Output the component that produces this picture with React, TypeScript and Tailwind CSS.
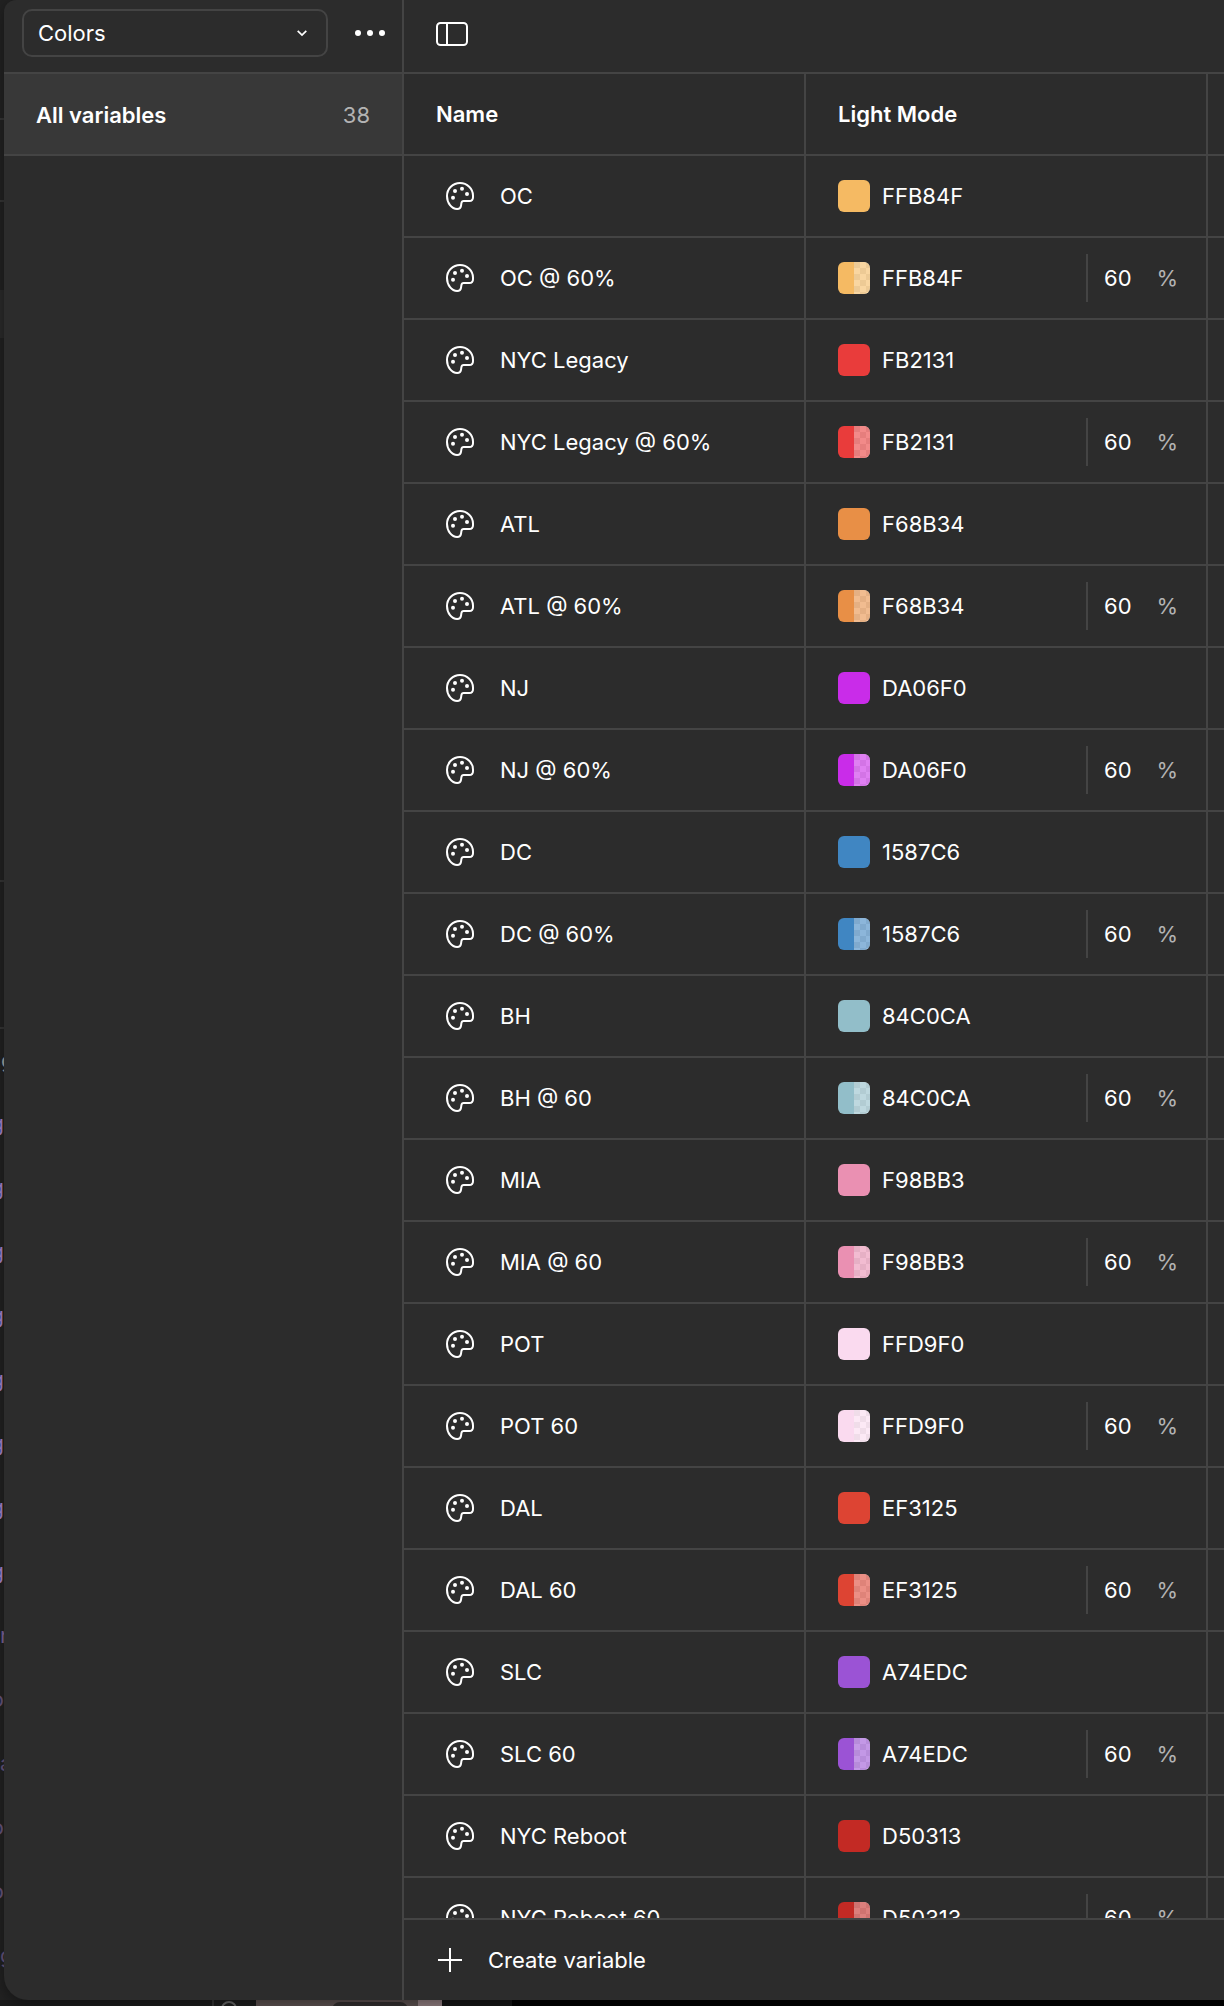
import clsx from 'clsx'

type Variable = {
  name: string
  hex: string
  color: string
  opacity?: number
}

const variables: Variable[] = [
  { name: 'OC', hex: 'FFB84F', color: '#f5ba63' },
  { name: 'OC @ 60%', hex: 'FFB84F', color: '#f5ba63', opacity: 60 },
  { name: 'NYC Legacy', hex: 'FB2131', color: '#e93c3b' },
  { name: 'NYC Legacy @ 60%', hex: 'FB2131', color: '#e93c3b', opacity: 60 },
  { name: 'ATL', hex: 'F68B34', color: '#e88f46' },
  { name: 'ATL @ 60%', hex: 'F68B34', color: '#e88f46', opacity: 60 },
  { name: 'NJ', hex: 'DA06F0', color: '#c92ce9' },
  { name: 'NJ @ 60%', hex: 'DA06F0', color: '#c92ce9', opacity: 60 },
  { name: 'DC', hex: '1587C6', color: '#4086c2' },
  { name: 'DC @ 60%', hex: '1587C6', color: '#4086c2', opacity: 60 },
  { name: 'BH', hex: '84C0CA', color: '#92bec9' },
  { name: 'BH @ 60', hex: '84C0CA', color: '#92bec9', opacity: 60 },
  { name: 'MIA', hex: 'F98BB3', color: '#ea90b2' },
  { name: 'MIA @ 60', hex: 'F98BB3', color: '#ea90b2', opacity: 60 },
  { name: 'POT', hex: 'FFD9F0', color: '#fadaef' },
  { name: 'POT 60', hex: 'FFD9F0', color: '#fadaef', opacity: 60 },
  { name: 'DAL', hex: 'EF3125', color: '#dd4433' },
  { name: 'DAL 60', hex: 'EF3125', color: '#dd4433', opacity: 60 },
  { name: 'SLC', hex: 'A74EDC', color: '#9b53d5' },
  { name: 'SLC 60', hex: 'A74EDC', color: '#9b53d5', opacity: 60 },
  { name: 'NYC Reboot', hex: 'D50313', color: '#c32a24' },
  { name: 'NYC Reboot 60', hex: 'D50313', color: '#c32a24', opacity: 60 },
]

// Layer names of the editor that peek out beside the dialog
const layers = [
  { text: 'g', className: 'justify-end text-[#a585d0]' },
  { text: 'g', className: 'justify-end text-[#a585d0]' },
  { text: 'g', className: 'justify-end text-[#a585d0]' },
  { text: 'g', className: 'justify-end text-[#a585d0]' },
  { text: 'g', className: 'justify-end text-[#a585d0]' },
  { text: 'g', className: 'justify-end text-[#a585d0]' },
  { text: 'g', className: 'justify-end text-[#a585d0]' },
  { text: 'g', className: 'justify-end text-[#a585d0]' },
  { text: 'r', className: 'text-[#7d669c]' },
  { text: 'o', className: 'justify-end text-[#66557e]' },
  { text: 'a', className: 'text-[#66557e]' },
  { text: 'o', className: 'justify-end text-[#66557e]' },
  { text: 'o', className: 'justify-end text-[#66557e]' },
  { text: 'g', className: 'text-[#66557e]' },
]

function PaletteIcon() {
  return (
    <svg width="28" height="28" viewBox="0 0 28 28" fill="none" aria-hidden="true">
      <path
        d="M14 1C21.2 1 27 6.8 27 13.6v1.6c0 2.4-1.5 3.8-3.7 3.8h-5.6c-1.5 0-2.1.8-2.3 2.2l-.4 2.6C14.700 25.800 13.200 27 11.200 27 5.600 27 1 21 1 14 1 6.800 6.800 1 14 1Z"
        stroke="currentColor"
        strokeWidth="2"
      />
      <circle cx="9" cy="9" r="2" fill="currentColor" />
      <circle cx="16" cy="6.800" r="2" fill="currentColor" />
      <circle cx="21" cy="12" r="2" fill="currentColor" />
      <circle cx="7" cy="15.800" r="2" fill="currentColor" />
    </svg>
  )
}

function Swatch({ color, opacity }: { color: string; opacity?: number }) {
  return (
    <span className="flex size-8 shrink-0 overflow-hidden rounded-md">
      <span className="flex-1" style={{ backgroundColor: color }} />
      {opacity && (
        <span className="flex-1 bg-[repeating-conic-gradient(#ffffff_0_25%,#e1e1e1_0_50%)] bg-[length:12px_12px]">
          <span className="block h-full" style={{ backgroundColor: color, opacity: opacity / 100 }} />
        </span>
      )}
    </span>
  )
}

function VariableRow({ variable }: { variable: Variable }) {
  const cell = 'h-[82px] border-b-2 border-[#444444] p-0'
  return (
    <tr>
      <th scope="row" className={clsx(cell, 'border-r-2 text-left font-normal')}>
        <div className="flex items-center gap-[26px] pl-[42px]">
          <PaletteIcon />
          <span>{variable.name}</span>
        </div>
      </th>
      <td className={clsx(cell, 'border-r-2')}>
        <div className="flex items-center pl-8">
          <Swatch color={variable.color} opacity={variable.opacity} />
          <span className="ml-3 flex-1">{variable.hex}</span>
          {variable.opacity && (
            <div className="flex h-12 w-[120px] items-center justify-between border-l-2 border-[#444444] pr-7 pl-4">
              <span>{variable.opacity}</span>
              <span className="text-[#b3b3b3]">%</span>
            </div>
          )}
        </div>
      </td>
      <td className={cell} />
    </tr>
  )
}

function Backdrop() {
  return (
    <div className="col-start-1 row-start-1 flex min-h-0 flex-col overflow-hidden bg-[#222222]" aria-hidden="true">
      <div className="flex min-h-0 w-1 flex-1 flex-col overflow-hidden">
        <div className="h-[120px] shrink-0 border-b-2 border-[#363636]" />
        <div className="h-[82px] shrink-0 border-b-2 border-[#363636]" />
        <div className="mt-[88px] h-12 shrink-0 bg-[#2b2b2b]" />
        <div className="h-[544px] shrink-0 border-b-2 border-[#363636]" />
        <div className="h-[147px] shrink-0 border-b-2 border-[#363636]" />
        <div className="flex h-[62px] shrink-0 items-center pl-px text-[#a8a8a8]">g</div>
        {layers.map((layer, i) => (
          <div key={i} className={clsx('flex h-16 shrink-0 items-center overflow-hidden', layer.className)}>
            {layer.text}
          </div>
        ))}
      </div>
      <div className="flex h-1.5 shrink-0 overflow-hidden bg-black">
        <div className="w-[212px] bg-[#1b1b1b]" />
        <div className="flex w-11 border-l-2 border-[#333333] bg-[#1d1d1d] pl-[7px]">
          <div className="mt-px h-4 w-4 rounded-full border-2 border-[#666666]" />
        </div>
        <div className="w-[162px] bg-[#5d5150]">
          <div className="mt-0.5 ml-[76px] h-4 w-[76px] rounded-lg bg-[#322e2e]" />
        </div>
        <div className="w-6 bg-[#917e80]" />
        <div className="w-[70px] bg-[#151515]" />
      </div>
    </div>
  )
}

export default function App() {
  return (
    <div className="grid h-screen grid-cols-[minmax(0,1fr)] grid-rows-[minmax(0,1fr)] overflow-hidden bg-[#222222] font-['Inter',sans-serif] text-[22px] leading-8 text-white antialiased">
      <Backdrop />

      <main className="z-10 col-start-1 row-start-1 mb-1.5 ml-1 flex min-h-0 overflow-hidden rounded-tl-xl rounded-bl-3xl bg-[#2c2c2c] shadow-[0_4px_16px_rgba(0,0,0,0.4)]">
        {/* Collections */}
        <aside className="flex w-[400px] shrink-0 flex-col border-r-2 border-[#444444]">
          <div className="flex h-[74px] shrink-0 items-center gap-[26px] border-b-2 border-[#444444] pb-1.5 pl-[18px]">
            <div className="grid w-[306px] items-center">
              <select
                aria-label="Collection"
                className="col-start-1 row-start-1 h-12 appearance-none rounded-[10px] border-2 border-[#444444] bg-transparent pr-12 pl-3.5"
              >
                <option>Colors</option>
              </select>
              <svg
                className="pointer-events-none col-start-1 row-start-1 mr-5 justify-self-end"
                width="12"
                height="8"
                viewBox="0 0 12 8"
                fill="none"
                aria-hidden="true"
              >
                <path d="M1.700 1.800 6 6l4.300-4.200" stroke="currentColor" strokeWidth="1.700" />
              </svg>
            </div>
            <button type="button" aria-label="More options">
              <svg width="32" height="6" viewBox="0 0 32 6" fill="currentColor">
                <circle cx="4" cy="3" r="3" />
                <circle cx="16" cy="3" r="3" />
                <circle cx="28" cy="3" r="3" />
              </svg>
            </button>
          </div>
          <button
            type="button"
            className="flex h-[82px] shrink-0 items-center justify-between border-b-2 border-[#444444] bg-[#383838] px-8 pt-0.5"
          >
            <span className="font-semibold">All variables</span>
            <span className="text-[#b3b3b3]">38</span>
          </button>
        </aside>

        <section className="flex min-w-0 flex-1 flex-col">
          <div className="flex h-[74px] shrink-0 items-center border-b-2 border-[#444444] pb-1 pl-8">
            <button type="button" aria-label="Toggle sidebar">
              <svg width="32" height="24" viewBox="0 0 32 24" fill="none" stroke="currentColor" strokeWidth="2">
                <rect x="1" y="1" width="30" height="22" rx="3.500" />
                <path d="M11 1v22" />
              </svg>
            </button>
          </div>

          {/* Variables */}
          <div className="min-h-0 flex-1 overflow-hidden">
            <table className="w-full table-fixed border-separate border-spacing-0">
              <colgroup>
                <col className="w-[402px]" />
                <col className="w-[402px]" />
                <col />
              </colgroup>
              <thead>
                <tr className="text-left">
                  <th className="h-[82px] border-r-2 border-b-2 border-[#444444] py-0 pl-8 font-semibold">Name</th>
                  <th className="h-[82px] border-r-2 border-b-2 border-[#444444] py-0 pl-8 font-semibold">Light Mode</th>
                  <th className="h-[82px] border-b-2 border-[#444444] p-0" />
                </tr>
              </thead>
              <tbody>
                {variables.map((variable) => (
                  <VariableRow key={variable.name} variable={variable} />
                ))}
              </tbody>
            </table>
          </div>

          <button
            type="button"
            className="flex h-[82px] shrink-0 items-center gap-[26px] border-t-2 border-[#444444] pl-[34px]"
          >
            <svg width="24" height="24" viewBox="0 0 24 24" stroke="currentColor" strokeWidth="2" aria-hidden="true">
              <path d="M12 0v24M0 12h24" />
            </svg>
            Create variable
          </button>
        </section>
      </main>
    </div>
  )
}
